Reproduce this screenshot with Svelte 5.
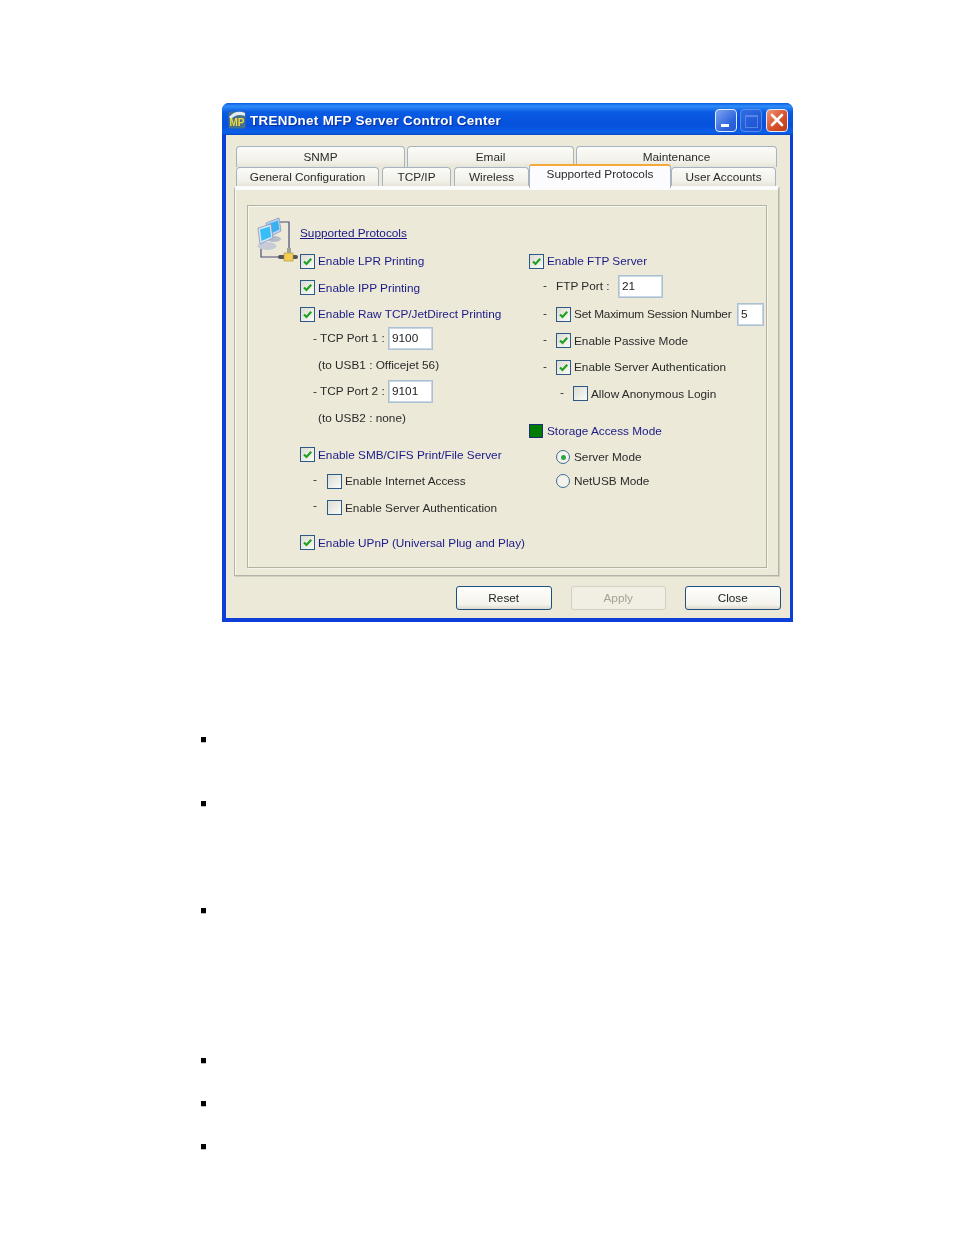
<script>
  const bullets = ['first', 'second', 'third', 'fourth', 'fifth', 'sixth'];
</script>

{#snippet check(on = true)}
  <span class="box">
    {#if on}
      <svg viewBox="0 0 11 11" width="11" height="11"><path d="M2 5.5 L4.5 8 L9.2 2.8" fill="none" stroke="#21a121" stroke-width="2.2" /></svg>
    {/if}
  </span>
{/snippet}

<main>
  <div class="window">
    <div class="titlebar">
      <svg class="logo" viewBox="0 0 18 18" width="18" height="18">
        <rect x="0.5" y="0.5" width="17" height="17" rx="2" fill="#47708c" />
        <path d="M1 6 Q8 -2 17 2 L17 5 Q9 2 3 8 Z" fill="#e3ecf2" />
        <text x="9" y="14.5" text-anchor="middle" font-size="10" font-weight="700" font-family="Liberation Sans, sans-serif" fill="#f0dc3c">MP</text>
      </svg>
      <span class="title">TRENDnet MFP Server Control Center</span>
      <div class="controls">
        <span class="ctl min"><i></i></span>
        <span class="ctl max"><i></i></span>
        <span class="ctl close">
          <svg viewBox="0 0 22 22" width="22" height="22"><path d="M6 6 L16 16 M16 6 L6 16" stroke="#fff" stroke-width="2.6" stroke-linecap="round" /></svg>
        </span>
      </div>
    </div>

    <div class="body">
      <div class="tabs upper">
        <span class="tab snmp">SNMP</span>
        <span class="tab email">Email</span>
        <span class="tab maint">Maintenance</span>
      </div>
      <div class="tabs lower">
        <span class="tab general">General Configuration</span>
        <span class="tab tcp">TCP/IP</span>
        <span class="tab wireless">Wireless</span>
        <span class="tab active">Supported Protocols</span>
        <span class="tab users">User Accounts</span>
      </div>

      <div class="panel">
        <div class="group">
          <div class="head">
            <svg class="net" viewBox="0 0 44 46" width="44" height="46">
              <path d="M23 5 H32 V36 M22 40 H4 V29" fill="none" stroke="#4c4c78" stroke-width="1.2" />
              <ellipse cx="10" cy="29" rx="9.5" ry="4" fill="#c6cbd6" />
              <ellipse cx="17" cy="22" rx="7" ry="3" fill="#b4bbc9" />
              <path d="M9 6 L22 1 L24 14 L12 20 Z" fill="#c3d6ee" stroke="#7f97c0" stroke-width=".8" />
              <path d="M11 7 L21 3.5 L22.4 12.6 L13 17 Z" fill="#3ab0ef" />
              <path d="M1 11 L14 7 L16 21 L3 27 Z" fill="#dbe6f5" stroke="#7f97c0" stroke-width=".8" />
              <path d="M3 12.4 L12.8 9.4 L14.2 19.8 L4.6 24 Z" fill="#39bdf6" />
              <rect x="21" y="38" width="20" height="4" rx="2" fill="#55565a" />
              <rect x="27" y="36" width="9" height="8" fill="#f3cd55" stroke="#b08f30" stroke-width=".6" />
              <rect x="30" y="31" width="4" height="5" fill="#a3a394" />
            </svg>
            <a class="heading" href="#protocols">Supported Protocols</a>
          </div>

          <div class="columns">
            <div class="col left">
              <label class="row blue">{@render check()}Enable LPR Printing</label>
              <label class="row blue">{@render check()}Enable IPP Printing</label>
              <label class="row blue">{@render check()}Enable Raw TCP/JetDirect Printing</label>
              <div class="row port near"><span class="port-label">- TCP Port 1 :</span><span class="field wide">9100</span></div>
              <div class="row note">(to USB1 : Officejet 56)</div>
              <div class="row port"><span class="port-label">- TCP Port 2 :</span><span class="field wide">9101</span></div>
              <div class="row note">(to USB2 : none)</div>
              <label class="row blue section">{@render check()}Enable SMB/CIFS Print/File Server</label>
              <label class="row sub"><span class="dash">-</span>{@render check(false)}Enable Internet Access</label>
              <label class="row sub"><span class="dash">-</span>{@render check(false)}Enable Server Authentication</label>
              <label class="row blue upnp">{@render check()}Enable UPnP (Universal Plug and Play)</label>
            </div>

            <div class="col right">
              <label class="row blue">{@render check()}Enable FTP Server</label>
              <div class="row rsub ftp"><span class="dash">-</span><span class="ftp-label">FTP Port :</span><span class="field wide">21</span></div>
              <label class="row rsub session"><span class="dash">-</span>{@render check()}<span class="session-label">Set Maximum Session Number</span><span class="field small">5</span></label>
              <label class="row rsub"><span class="dash">-</span>{@render check()}Enable Passive Mode</label>
              <label class="row rsub"><span class="dash">-</span>{@render check()}Enable Server Authentication</label>
              <label class="row rsub anon"><span class="dash">-</span>{@render check(false)}Allow Anonymous Login</label>
              <div class="row blue section"><span class="storage"></span>Storage Access Mode</div>
              <label class="row radio-row"><span class="radio on"></span>Server Mode</label>
              <label class="row radio-row last"><span class="radio"></span>NetUSB Mode</label>
            </div>
          </div>
        </div>
      </div>

      <div class="actions">
        <button>Reset</button>
        <button disabled>Apply</button>
        <button>Close</button>
      </div>
    </div>
  </div>

  <ul class="notes">
    {#each bullets as b}
      <li class={b}></li>
    {/each}
  </ul>
</main>

<style>
  :global(body) { margin: 0; background: #fff; }
  main { height: 1235px; overflow: hidden; font-family: "Liberation Sans", Arial, sans-serif; font-size: 11.8px; color: #2a2a2a; }

  .window {
    margin: 103px 0 0 222px;
    width: 571px;
    height: 519px;
    box-sizing: border-box;
    padding: 0 3px 4px 4px;
    background: #0c3fd8;
    border-radius: 7px 7px 0 0;
    display: flex;
    flex-direction: column;
    filter: blur(0.35px);
  }
  .titlebar {
    height: 32px;
    margin: 0 -3px 0 -4px;
    padding: 2px 5px 0 6px;
    box-sizing: border-box;
    display: flex;
    align-items: center;
    border-radius: 7px 7px 0 0;
    background: linear-gradient(#0a5fe6 0%, #2f8cf7 10%, #0a5ce4 28%, #0550dc 70%, #0a60ea 92%, #0a46c0 100%);
  }
  .logo { flex: none; }
  .title { margin-left: 4px; color: #fff; font-size: 13.4px; font-weight: 700; letter-spacing: 0.3px; text-shadow: 1px 1px 0 #0a2f9a; }
  .controls { margin-left: auto; display: flex; gap: 3px; }
  .ctl { width: 22px; height: 23px; box-sizing: border-box; border: 1px solid #e3ecfb; border-radius: 4px; display: flex; }
  .ctl.min { background: linear-gradient(135deg, #7da4f2, #2b62da 70%, #2a5ad0); }
  .ctl.min i { width: 8px; height: 3px; background: #fff; margin: 14px 0 0 5px; }
  .ctl.max { background: linear-gradient(135deg, #3c72e4, #2050cc); opacity: 0.75; border-color: #6f9bee; }
  .ctl.max i { width: 11px; height: 10px; border: 1px solid #6f95e8; border-top-width: 2px; margin: 5px 0 0 4px; }
  .ctl.close { background: linear-gradient(135deg, #ee9478, #d8512a 55%, #bb3d16); align-items: center; justify-content: center; margin-left: 1px; }
  .ctl.close svg { margin: -1px; flex: none; }

  .body { flex: 1; background: #ece9d8; padding: 11px 0 0 8px; display: flex; flex-direction: column; }
  .tabs { display: flex; }
  .tab {
    box-sizing: border-box;
    display: flex;
    align-items: center;
    justify-content: center;
    color: #2a2a2a;
    background: linear-gradient(#fbfbf8, #f1f0e8 75%, #e6e4d8);
    border: 1px solid #a6b4c2;
    border-bottom: 0;
    border-radius: 4px 4px 0 0;
  }
  .upper { margin-left: 2px; gap: 2px; height: 21px; }
  .snmp { width: 169px; }
  .email { width: 167px; }
  .maint { width: 201px; }
  .lower { margin-left: 2px; height: 19px; }
  .general { width: 143px; }
  .tcp { width: 69px; margin-left: 3px; }
  .wireless { width: 75px; margin-left: 3px; }
  .users { width: 105px; }
  .tab.active {
    width: 142px;
    height: 24px;
    margin-top: -3px;
    padding-bottom: 6px;
    position: relative;
    z-index: 1;
    background: #fcfcfe;
    border-top: 2px solid #f5a93a;
    border-color: #f5a93a #a6b4c2 #fcfcfe;
    border-radius: 3px 3px 0 0;
  }
  .panel {
    width: 545px;
    height: 390px;
    box-sizing: border-box;
    padding: 16px 11px 7px 12px;
    background: #ece9d8;
    border: 1px solid #b2b2a6;
    border-top: 3px solid #fcfcfe;
    box-shadow: inset 1px 1px 0 #fafaf6, 1px 1px 0 #cfcfc4;
  }
  .group {
    height: 100%;
    box-sizing: border-box;
    border: 1px solid #b3b3a4;
    box-shadow: inset 1px 1px 0 #f8f8f2, 1px 1px 0 #f6f5ec;
    padding: 11px 0 0 9px;
  }
  .head { display: flex; height: 34px; }
  .net { flex: none; margin-bottom: -12px; }
  .heading { margin: 9px 0 0 -1px; color: #161686; line-height: 15px; height: 15px; }
  .columns { display: flex; }
  .col { display: flex; flex-direction: column; gap: 6.5px; }
  .col.left { width: 229px; margin-left: 43px; }
  .col.right { flex: 1; }

  .row { height: 20px; display: flex; align-items: center; white-space: nowrap; }
  .blue { color: #1a1a88; }
  .section { margin-top: 10.5px; }
  .near { margin-top: -2.5px; }
  .upnp { margin-top: 8.5px; }
  .ftp { margin-top: -1.5px; }
  .session { margin-top: 1.5px; }
  .last { margin-top: -2.5px; }

  .box {
    flex: none;
    width: 15px;
    height: 15px;
    box-sizing: border-box;
    margin-right: 3px;
    border: 1.5px solid #2b5a86;
    background: linear-gradient(135deg, #dcdcd2, #fbfbf8);
    display: flex;
    align-items: center;
    justify-content: center;
  }
  .port-label { width: 75px; margin-left: 13px; flex: none; }
  .note { padding-left: 18px; }
  .field {
    box-sizing: border-box;
    height: 23px;
    padding: 0 0 1px 3px;
    display: flex;
    align-items: center;
    background: #fff;
    border: 1px solid #a9c0d6;
    outline: 1px solid #cbd8e2;
    outline-offset: -2px;
    color: #222;
  }
  .field.wide { width: 45px; }
  .field.small { width: 27px; margin-left: 5px; }
  .session-label { width: 158px; flex: none; letter-spacing: -0.2px; }
  .sub { padding-left: 13px; }
  .sub .dash { width: 14px; flex: none; margin-top: -5px; }
  .rsub { padding-left: 14px; }
  .rsub .dash { width: 13px; flex: none; margin-top: -3px; }
  .ftp-label { width: 62px; flex: none; }
  .anon { padding-left: 31px; }
  .storage { width: 14px; height: 14px; box-sizing: border-box; margin-right: 4px; background: #007a00; border: 1.5px solid #1a2f78; }
  .radio-row { padding-left: 27px; }
  .radio {
    width: 14px;
    height: 14px;
    box-sizing: border-box;
    margin-right: 4px;
    border: 1.5px solid #3f6d96;
    border-radius: 50%;
    background: #f3f3ec;
    display: flex;
    align-items: center;
    justify-content: center;
  }
  .radio.on::after { content: ""; width: 5px; height: 5px; border-radius: 50%; background: #2fa34a; }

  .actions { display: flex; gap: 19px; margin: 10px 0 0 222px; }
  button {
    width: 95.5px;
    height: 24px;
    padding: 0;
    font: inherit;
    color: #222;
    background: linear-gradient(#fefefc, #f4f3ec 80%, #dcd8cc);
    border: 1.5px solid #1f4f7e;
    border-radius: 3px;
  }
  button:disabled { color: #a3a392; background: #f1efe4; border-color: #d2d0c2; }

  .notes { list-style: none; margin: 0; padding: 0; position: relative; }
  .notes li { width: 5px; height: 5px; margin-left: 201px; background: #000; box-shadow: 0 1px 0 #bbb; }
  .first { margin-top: 115px; }
  .second { margin-top: 59px; }
  .third { margin-top: 102px; }
  .fourth { margin-top: 145px; }
  .fifth { margin-top: 38px; }
  .sixth { margin-top: 38px; }
</style>
